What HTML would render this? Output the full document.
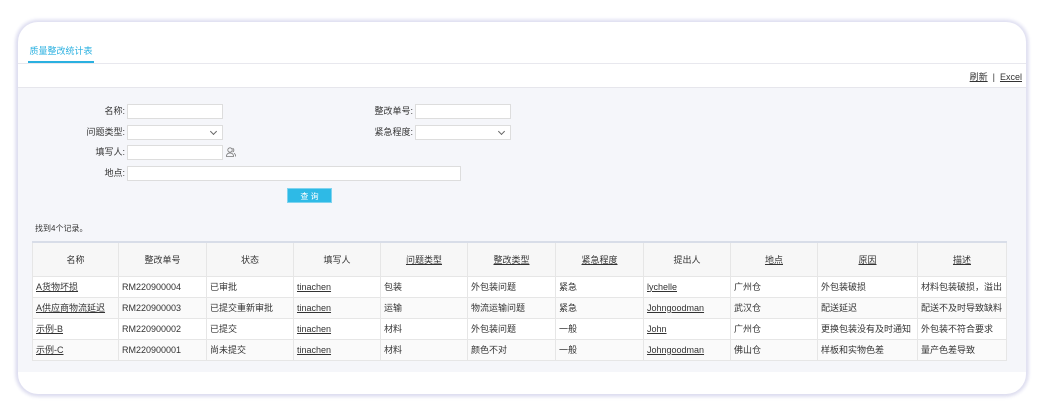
<!DOCTYPE html><html><head><meta charset="utf-8"><style>
*{margin:0;padding:0;box-sizing:border-box}
body{width:1044px;height:418px;background:#fff;font-family:"Liberation Sans","Noto Sans CJK SC",sans-serif;font-size:9px;color:#333;position:relative;overflow:hidden}
.card{position:absolute;left:18px;top:22px;width:1008px;height:372px;background:#fff;border-radius:20px;box-shadow:-2px 0 4px #dcdcef,0 -2px 5px #e4e4f4,0 2px 5px #dcdcee,2px 0 4px #dcdcef;overflow:hidden}
.tab{position:absolute;left:10px;top:22px;width:66px;height:19px;color:#2ab0e0;text-align:center;border-bottom:2px solid #2ab0e0;font-size:9px}
.l1{position:absolute;left:0;right:0;top:41px;border-top:1px solid #e8e8ee}
.tools{position:absolute;right:4px;top:48px;font-size:9px}
.tools u{color:#333}
.gray{position:absolute;left:0;right:0;top:65px;height:285px;background:#f5f6fa;border-top:1px solid #e6e6ec}
.lab{position:absolute;text-align:right;width:80px;line-height:14px}
.in{position:absolute;height:15px;background:#fff;border:1px solid #ddd}
.sel:after{content:"";position:absolute;right:6px;top:3px;width:4px;height:4px;border-right:1px solid #666;border-bottom:1px solid #666;transform:rotate(45deg)}
.btn{position:absolute;left:269px;top:100px;width:45px;height:15px;background:#2ebae6;color:#fff;text-align:center;line-height:15px;font-size:8px;border:1px solid #7fd3ef}
table{position:absolute;left:14px;top:153px;border-collapse:collapse;border-top:2px solid #d8dde8}
td,th{border:1px solid #e6e6e6;height:21px;padding:0 3px;font-weight:normal;text-align:left;white-space:nowrap}
th{height:34px;background:#f7f7f7;text-align:center}
tr.w td{background:#fff}tr.g td{background:#fafafa}
u{color:#333}
</style></head><body>
<div class="card">
<div class="tab">质量整改统计表</div>
<div class="l1"></div>
<div class="tools"><u>刷新</u> &nbsp;|&nbsp; <u>Excel</u></div>
<div class="gray">
<div class="lab" style="left:27px;top:16px">名称:</div><div class="in" style="left:109px;top:16px;width:96px"></div>
<div class="lab" style="left:315px;top:16px">整改单号:</div><div class="in" style="left:397px;top:16px;width:96px"></div>
<div class="lab" style="left:27px;top:37px">问题类型:</div><div class="in sel" style="left:109px;top:37px;width:96px"></div>
<div class="lab" style="left:315px;top:37px">紧急程度:</div><div class="in sel" style="left:397px;top:37px;width:96px"></div>
<div class="lab" style="left:27px;top:57px">填写人:</div><div class="in" style="left:109px;top:57px;width:96px"></div>
<svg style="position:absolute;left:208px;top:59px" width="10" height="10" viewBox="0 0 10 10" fill="none" stroke="#777" stroke-width=".8"><circle cx="4" cy="3" r="2.2"/><path d="M0.5 9.5c0-2.5 1.5-3.5 3.5-3.5s3.5 1 3.5 3.5z"/><path d="M6.5 1.2a2 2 0 0 1 0 3.8M8 6.2c1 .5 1.6 1.5 1.6 3.3"/></svg>
<div class="lab" style="left:27px;top:78px">地点:</div><div class="in" style="left:109px;top:78px;width:334px"></div>
<div class="btn">查 询</div>
<div style="position:absolute;left:17px;top:135px;font-size:8px">找到4个记录。</div>
<table>
<tr><th style="width:86px">名称</th><th style="width:88px">整改单号</th><th style="width:87px">状态</th><th style="width:87px">填写人</th><th style="width:87px"><u>问题类型</u></th><th style="width:88px"><u>整改类型</u></th><th style="width:88px"><u>紧急程度</u></th><th style="width:87px">提出人</th><th style="width:87px"><u>地点</u></th><th style="width:100px"><u>原因</u></th><th style="width:89px"><u>描述</u></th></tr>
<tr class="w"><td><u>A货物坏损</u></td><td>RM220900004</td><td>已审批</td><td><u>tinachen</u></td><td>包装</td><td>外包装问题</td><td>紧急</td><td><u>lychelle</u></td><td>广州仓</td><td>外包装破损</td><td>材料包装破损，溢出</td></tr>
<tr class="g"><td><u>A供应商物流延迟</u></td><td>RM220900003</td><td>已提交重新审批</td><td><u>tinachen</u></td><td>运输</td><td>物流运输问题</td><td>紧急</td><td><u>Johngoodman</u></td><td>武汉仓</td><td>配送延迟</td><td>配送不及时导致缺料</td></tr>
<tr class="w"><td><u>示例-B</u></td><td>RM220900002</td><td>已提交</td><td><u>tinachen</u></td><td>材料</td><td>外包装问题</td><td>一般</td><td><u>John</u></td><td>广州仓</td><td>更换包装没有及时通知</td><td>外包装不符合要求</td></tr>
<tr class="g"><td><u>示例-C</u></td><td>RM220900001</td><td>尚未提交</td><td><u>tinachen</u></td><td>材料</td><td>颜色不对</td><td>一般</td><td><u>Johngoodman</u></td><td>佛山仓</td><td>样板和实物色差</td><td>量产色差导致</td></tr>
</table>
</div>
</div>
</body></html>
